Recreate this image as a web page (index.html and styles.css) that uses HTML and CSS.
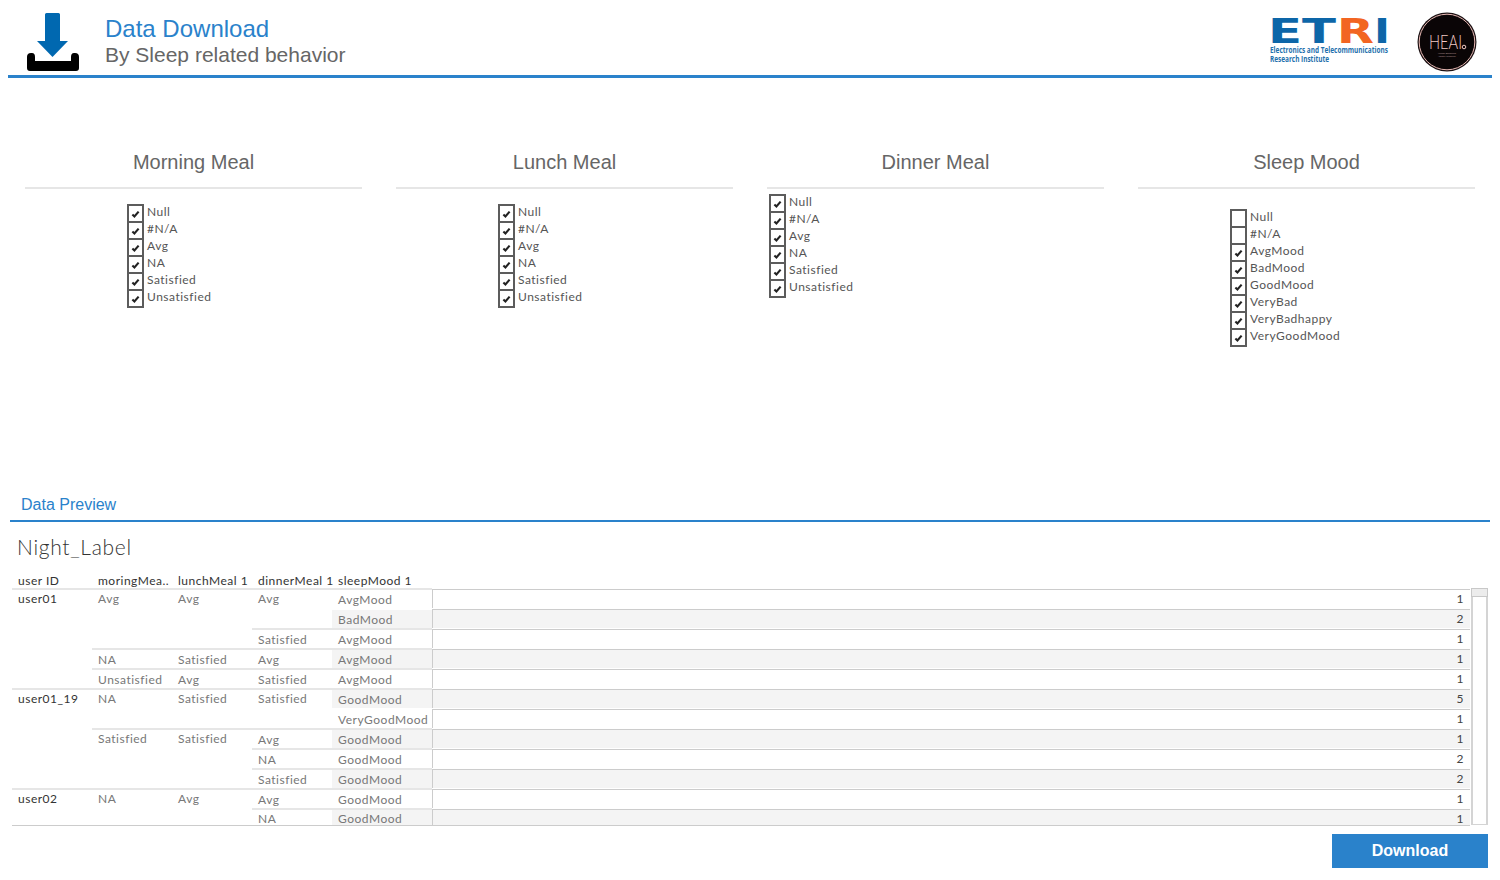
FILE: index.html
```html
<!DOCTYPE html>
<html lang="en">
<head>
<meta charset="utf-8">
<title>Data Download</title>
<link rel="stylesheet" href="styles.css">
</head>
<body>
<div class="page">
  <header class="top">
    <svg class="dl-icon" width="54" height="60" viewBox="0 0 54 60">
      <path fill="#0068b0" d="M20 2.500Q20 1 21.500 1H33.500Q35 1 35 2.500V29H43L27.500 45L12 29H20Z"/>
      <path fill="#000" d="M2 45Q2 41 6 41H7Q10 41 10 45V49H46V45Q46 41 49 41H50Q54 41 54 45V56Q54 59 51 59H5Q2 59 2 56Z" />
    </svg>
    <div class="top-text">
      <div class="top-title">Data Download</div>
      <div class="top-sub">By Sleep related behavior</div>
    </div>
    <svg class="etri" width="120" height="46" viewBox="0 0 120 46">
      <text class="etri-mark" x="-2" y="25" textLength="68" lengthAdjust="spacingAndGlyphs" fill="#0d66a8">ET</text>
      <text class="etri-mark" x="67" y="25" textLength="37" lengthAdjust="spacingAndGlyphs" fill="#f26522">R</text>
      <text class="etri-mark" x="104" y="25" textLength="16" lengthAdjust="spacingAndGlyphs" fill="#0d66a8">I</text>
      <text class="etri-small" x="0" y="35" textLength="118" lengthAdjust="spacingAndGlyphs">Electronics and Telecommunications</text>
      <text class="etri-small" x="0" y="43.500" textLength="59" lengthAdjust="spacingAndGlyphs">Research Institute</text>
    </svg>
    <svg class="heai" width="60" height="60" viewBox="0 0 60 60">
      <circle cx="30" cy="30" r="29.500" fill="#1a1012"/>
      <circle cx="30" cy="30" r="27.800" fill="#0a0506" stroke="#e8b9b4" stroke-width="1"/>
      <text class="heai-mark" x="12" y="37" textLength="33" lengthAdjust="spacingAndGlyphs">HEAI</text>
      <circle cx="47" cy="35" r="1.800" fill="none" stroke="#f0c8c4" stroke-width="1"/>
      <text class="heai-tiny" x="21" y="42" textLength="18" lengthAdjust="spacingAndGlyphs">Human Enhancing</text>
      <text class="heai-tiny" x="21" y="45" textLength="18" lengthAdjust="spacingAndGlyphs">Assistive Technology</text>
    </svg>
  </header>

  <section class="filters">
    <div class="filter">
      <h2 class="filter-title">Morning Meal</h2>
      <ul class="checks checks-std">
        <li class="check"><span class="box on"><svg width="9" height="8" viewBox="0 0 10 9"><path d="M1.500 5L3.800 7.200L8.500 1.800"/></svg></span>Null</li>
        <li class="check"><span class="box on"><svg width="9" height="8" viewBox="0 0 10 9"><path d="M1.500 5L3.800 7.200L8.500 1.800"/></svg></span>#N/A</li>
        <li class="check"><span class="box on"><svg width="9" height="8" viewBox="0 0 10 9"><path d="M1.500 5L3.800 7.200L8.500 1.800"/></svg></span>Avg</li>
        <li class="check"><span class="box on"><svg width="9" height="8" viewBox="0 0 10 9"><path d="M1.500 5L3.800 7.200L8.500 1.800"/></svg></span>NA</li>
        <li class="check"><span class="box on"><svg width="9" height="8" viewBox="0 0 10 9"><path d="M1.500 5L3.800 7.200L8.500 1.800"/></svg></span>Satisfied</li>
        <li class="check"><span class="box on"><svg width="9" height="8" viewBox="0 0 10 9"><path d="M1.500 5L3.800 7.200L8.500 1.800"/></svg></span>Unsatisfied</li>
      </ul>
    </div>
    <div class="filter">
      <h2 class="filter-title">Lunch Meal</h2>
      <ul class="checks checks-std">
        <li class="check"><span class="box on"><svg width="9" height="8" viewBox="0 0 10 9"><path d="M1.500 5L3.800 7.200L8.500 1.800"/></svg></span>Null</li>
        <li class="check"><span class="box on"><svg width="9" height="8" viewBox="0 0 10 9"><path d="M1.500 5L3.800 7.200L8.500 1.800"/></svg></span>#N/A</li>
        <li class="check"><span class="box on"><svg width="9" height="8" viewBox="0 0 10 9"><path d="M1.500 5L3.800 7.200L8.500 1.800"/></svg></span>Avg</li>
        <li class="check"><span class="box on"><svg width="9" height="8" viewBox="0 0 10 9"><path d="M1.500 5L3.800 7.200L8.500 1.800"/></svg></span>NA</li>
        <li class="check"><span class="box on"><svg width="9" height="8" viewBox="0 0 10 9"><path d="M1.500 5L3.800 7.200L8.500 1.800"/></svg></span>Satisfied</li>
        <li class="check"><span class="box on"><svg width="9" height="8" viewBox="0 0 10 9"><path d="M1.500 5L3.800 7.200L8.500 1.800"/></svg></span>Unsatisfied</li>
      </ul>
    </div>
    <div class="filter">
      <h2 class="filter-title">Dinner Meal</h2>
      <ul class="checks checks-dinner">
        <li class="check"><span class="box on"><svg width="9" height="8" viewBox="0 0 10 9"><path d="M1.500 5L3.800 7.200L8.500 1.800"/></svg></span>Null</li>
        <li class="check"><span class="box on"><svg width="9" height="8" viewBox="0 0 10 9"><path d="M1.500 5L3.800 7.200L8.500 1.800"/></svg></span>#N/A</li>
        <li class="check"><span class="box on"><svg width="9" height="8" viewBox="0 0 10 9"><path d="M1.500 5L3.800 7.200L8.500 1.800"/></svg></span>Avg</li>
        <li class="check"><span class="box on"><svg width="9" height="8" viewBox="0 0 10 9"><path d="M1.500 5L3.800 7.200L8.500 1.800"/></svg></span>NA</li>
        <li class="check"><span class="box on"><svg width="9" height="8" viewBox="0 0 10 9"><path d="M1.500 5L3.800 7.200L8.500 1.800"/></svg></span>Satisfied</li>
        <li class="check"><span class="box on"><svg width="9" height="8" viewBox="0 0 10 9"><path d="M1.500 5L3.800 7.200L8.500 1.800"/></svg></span>Unsatisfied</li>
      </ul>
    </div>
    <div class="filter">
      <h2 class="filter-title">Sleep Mood</h2>
      <ul class="checks checks-sleep">
        <li class="check"><span class="box"></span>Null</li>
        <li class="check"><span class="box"></span>#N/A</li>
        <li class="check"><span class="box on"><svg width="9" height="8" viewBox="0 0 10 9"><path d="M1.500 5L3.800 7.200L8.500 1.800"/></svg></span>AvgMood</li>
        <li class="check"><span class="box on"><svg width="9" height="8" viewBox="0 0 10 9"><path d="M1.500 5L3.800 7.200L8.500 1.800"/></svg></span>BadMood</li>
        <li class="check"><span class="box on"><svg width="9" height="8" viewBox="0 0 10 9"><path d="M1.500 5L3.800 7.200L8.500 1.800"/></svg></span>GoodMood</li>
        <li class="check"><span class="box on"><svg width="9" height="8" viewBox="0 0 10 9"><path d="M1.500 5L3.800 7.200L8.500 1.800"/></svg></span>VeryBad</li>
        <li class="check"><span class="box on"><svg width="9" height="8" viewBox="0 0 10 9"><path d="M1.500 5L3.800 7.200L8.500 1.800"/></svg></span>VeryBadhappy</li>
        <li class="check"><span class="box on"><svg width="9" height="8" viewBox="0 0 10 9"><path d="M1.500 5L3.800 7.200L8.500 1.800"/></svg></span>VeryGoodMood</li>
      </ul>
    </div>
  </section>

  <section class="preview">
    <h2 class="preview-title">Data Preview</h2>
    <h3 class="sheet-title">Night_Label</h3>
    <div class="table-wrap">
      <div class="table">
        <div class="th">user ID</div><div class="th">moringMea..</div><div class="th">lunchMeal 1</div><div class="th">dinnerMeal 1</div><div class="th">sleepMood 1</div><div class="th"></div>

        <div class="td user s5">user01</div><div class="td s3">Avg</div><div class="td s3">Avg</div><div class="td s2">Avg</div><div class="td mood">AvgMood</div><div class="val">1</div>
        <div class="td mood band plain">BadMood</div><div class="val band plain">2</div>
        <div class="td mood">Satisfied</div><div class="td mood">AvgMood</div><div class="val">1</div>
        <div class="td mood">NA</div><div class="td mood">Satisfied</div><div class="td mood">Avg</div><div class="td mood band">AvgMood</div><div class="val band">1</div>
        <div class="td mood">Unsatisfied</div><div class="td mood">Avg</div><div class="td mood">Satisfied</div><div class="td mood">AvgMood</div><div class="val">1</div>

        <div class="td user s5">user01_19</div><div class="td s2">NA</div><div class="td s2">Satisfied</div><div class="td s2">Satisfied</div><div class="td mood band">GoodMood</div><div class="val band">5</div>
        <div class="td mood plain">VeryGoodMood</div><div class="val plain">1</div>
        <div class="td s3">Satisfied</div><div class="td s3">Satisfied</div><div class="td mood">Avg</div><div class="td mood band">GoodMood</div><div class="val band">1</div>
        <div class="td mood">NA</div><div class="td mood">GoodMood</div><div class="val">2</div>
        <div class="td mood">Satisfied</div><div class="td mood band">GoodMood</div><div class="val band">2</div>

        <div class="td user s2">user02</div><div class="td s2">NA</div><div class="td s2">Avg</div><div class="td mood">Avg</div><div class="td mood">GoodMood</div><div class="val">1</div>
        <div class="td last">NA</div><div class="td band last">GoodMood</div><div class="val band">1</div>
      </div>
      <div class="scrollbar"><div class="thumb"></div></div>
    </div>
    <div class="actions"><button class="download" type="button">Download</button></div>
  </section>
</div>
</body>
</html>
```

FILE: styles.css
```css
* { box-sizing: border-box; }
html, body { margin: 0; padding: 0; background: #fff; }
body { font-family: "Lato", "Liberation Sans", sans-serif; overflow: hidden; }
.page { width: 1500px; height: 880px; display: flex; flex-direction: column; }

.top {
  margin: 0 8px;
  height: 78px;
  border-bottom: 3px solid #2a82cb;
  display: flex;
  align-items: flex-start;
  padding: 12px 15px 0 17px;
}
.dl-icon { flex: none; }
.top-text { margin-left: 26px; font-family: "Liberation Sans", Arial, sans-serif; }
.top-title { font-size: 24px; line-height: 30px; margin-top: 2px; color: #2a82cb; }
.top-sub { font-size: 21px; line-height: 24px; margin-top: -1px; color: #666; }
.etri { flex: none; margin-left: auto; margin-top: 6px; overflow: visible; }
.etri-mark { font-family: "DejaVu Sans", sans-serif; font-weight: 700; font-size: 33px; }
.etri-small { font-family: "Open Sans", sans-serif; font-weight: 700; font-size: 8px; fill: #1f71ad; }
.heai { flex: none; margin-left: 27px; }
.heai-mark { font-family: "Lato", sans-serif; font-weight: 300; font-size: 20px; fill: #f0c8c4; }
.heai-tiny { font-family: "Liberation Sans", sans-serif; font-size: 2.500px; fill: #b99; }

.filters {
  height: 416px;
  padding: 69px 25px 0;
  display: grid;
  grid-template-columns: repeat(4, 337px);
  column-gap: 34px;
  align-items: start;
}
.filter-title {
  margin: 0;
  height: 42px;
  padding-bottom: 10px;
  border-bottom: 2px solid #e6e6e6;
  font-family: "Liberation Sans", Arial, sans-serif;
  font-weight: 400;
  font-size: 20px;
  line-height: 30px;
  color: #666;
  text-align: center;
}
.checks { list-style: none; margin: 0; padding: 0; }
.checks-std { margin: 15px 0 0 102px; }
.checks-dinner { margin: 5px 0 0 2px; }
.checks-sleep { margin: 20px 0 0 92px; }
.check {
  height: 17px;
  display: flex;
  align-items: flex-start;
  font-size: 12px;
  line-height: 16px;
  color: #555;
  letter-spacing: 0.5px;
}
.box {
  flex: none;
  width: 17px;
  height: 19px;
  margin-right: 3px;
  border: 2px solid #5c5c5c;
  background: #fff;
  display: flex;
  align-items: center;
  justify-content: center;
}
.box svg { fill: none; stroke: #222; stroke-width: 2.400; }

.preview { flex: 1; }
.preview-title {
  margin: 0 10px;
  padding: 1px 0 5px 11px;
  border-bottom: 2px solid #2a82cb;
  font-family: "Liberation Sans", Arial, sans-serif;
  font-weight: 400;
  font-size: 16px;
  line-height: 20px;
  color: #2a82cb;
}
.sheet-title {
  margin: 12px 0 14px 17px;
  font-family: "Lato", sans-serif;
  font-weight: 300;
  font-size: 21px;
  line-height: 26px;
  letter-spacing: 0.7px;
  color: #333;
}
.table-wrap { display: flex; margin-left: 12px; height: 252px; }
.table {
  width: 1458px;
  height: 252px;
  display: grid;
  grid-template-columns: 80px 80px 80px 80px 100px 1fr;
  grid-template-rows: 14px repeat(11, 20px) 17px;
  border-bottom: 1px solid #ccc;
  overflow: hidden;
  font-size: 12px;
  letter-spacing: 0.5px;
}
.th { padding-left: 6px; line-height: 14px; color: #333; white-space: nowrap; }
.td {
  padding-left: 6px;
  border-top: 2px solid #e6e6e6;
  line-height: 18px;
  color: #777;
  white-space: nowrap;
  overflow: hidden;
  background-clip: padding-box;
}
.s2 { grid-row: span 2; }
.s3 { grid-row: span 3; }
.s5 { grid-row: span 5; }
.user { color: #333; }
.mood { padding-top: 1px; }
.last { padding-top: 0; }
.plain { border-top-color: transparent; }
.band { background-color: #f4f4f4; }
.val {
  margin-top: 1px;
  padding-right: 6px;
  border-top: 1px solid #ccc;
  border-left: 1px solid #ccc;
  line-height: 18px;
  text-align: right;
  color: #444;
  background-clip: padding-box;
}
.scrollbar {
  width: 17px;
  margin-left: 1px;
  border-left: 2px solid #d4d4d4;
  border-right: 2px solid #d4d4d4;
  border-bottom: 1px solid #d4d4d4;
  height: 237px;
  margin-top: 14px;
}
.thumb { height: 9px; margin: 0 -2px; background: #ececec; border: 1px solid #c8c8c8; }
.actions { display: flex; justify-content: flex-end; padding: 8px 12px 0 0; }
.download {
  width: 156px;
  height: 34px;
  padding: 0;
  border: 0;
  background: #2a82cb;
  color: #fff;
  font-family: "Liberation Sans", Arial, sans-serif;
  font-weight: 700;
  font-size: 16px;
}
```
